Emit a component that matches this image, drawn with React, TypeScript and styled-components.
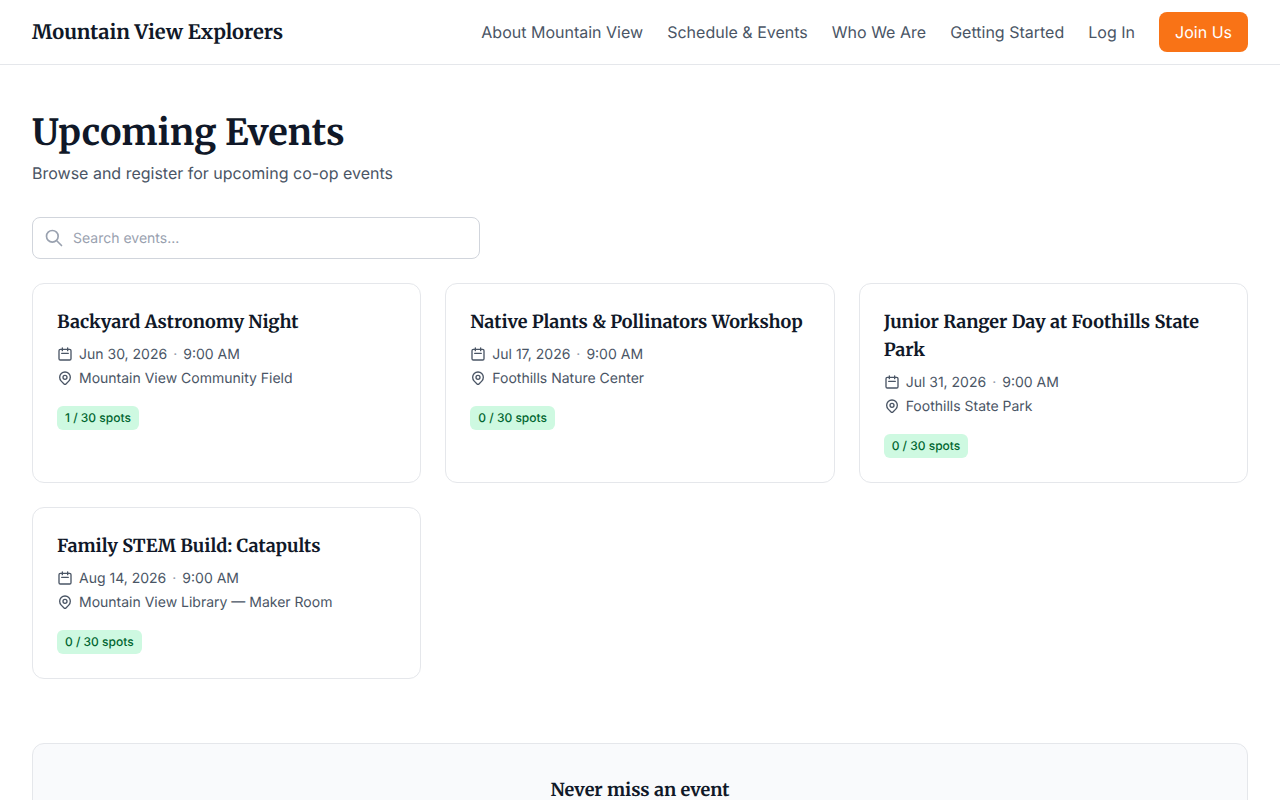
import React from "react";
import styled, { createGlobalStyle } from "styled-components";

const serif = `Merriweather, "Liberation Serif", serif`;
const ink = "#101828";
const muted = "#4a5565";
const line = "#e5e7eb";

const GlobalStyle = createGlobalStyle`
  *, *::before, *::after { box-sizing: border-box; }
  html { height: 100%; }
  body {
    margin: 0;
    height: 100vh;
    overflow: hidden;
    background: #fff;
    color: ${ink};
    font: 16px/24px Inter, "Liberation Sans", sans-serif;
    text-rendering: geometricPrecision;
  }
  h1, h2, h3, p { margin: 0; }
  a { text-decoration: none; }
`;

const Header = styled.header`
  display: flex;
  align-items: center;
  justify-content: space-between;
  height: 65px;
  padding: 0 32px;
  border-bottom: 1px solid ${line};
`;

const Brand = styled.a`
  padding-top: 2px;
  color: ${ink};
  font: 700 20px/28px ${serif};
`;

const Nav = styled.nav`
  display: flex;
  align-items: center;
  gap: 24.1px;
`;

const NavLink = styled.a`
  color: ${muted};
`;

const JoinButton = styled.a`
  padding: 8px 16px;
  border-radius: 8px;
  background: #f97316;
  color: #fff;
`;

const Main = styled.main`
  padding: 48px 32px;
`;

const PageTitle = styled.h1`
  font: 700 36px/40px ${serif};
`;

const Subtitle = styled.p`
  margin-top: 8px;
  color: ${muted};
`;

const SearchField = styled.label`
  display: flex;
  align-items: center;
  gap: 9px;
  width: 448px;
  height: 42px;
  margin: 32px 0 24px;
  padding: 0 16px 0 11px;
  border: 1px solid #d1d5dc;
  border-radius: 8px;
  color: #99a1af;
`;

const SearchInput = styled.input`
  flex: 1;
  min-width: 0;
  padding: 2px 0 0;
  border: 0;
  outline: 0;
  background: transparent;
  color: ${ink};
  font: 14px/20px Inter, "Liberation Sans", sans-serif;
  text-rendering: inherit;

  &::placeholder { color: #99a1af; }
`;

const Icon = styled.svg<{ $size: number }>`
  flex: none;
  width: ${(p) => p.$size}px;
  height: ${(p) => p.$size}px;
  fill: none;
  stroke: currentColor;
  stroke-width: 2;
  stroke-linecap: round;
  stroke-linejoin: round;
`;

const EventGrid = styled.section`
  display: grid;
  grid-template-columns: repeat(3, 1fr);
  gap: 24px;
`;

const EventCard = styled.article`
  padding: 24px;
  border: 1px solid ${line};
  border-radius: 12px;
  background: #fff;
`;

const SectionTitle = styled.h2`
  font: 700 18px/28px ${serif};
`;

const Details = styled.div`
  display: grid;
  gap: 4px;
  margin: 8px 0 18px;
`;

const Detail = styled.div`
  display: flex;
  align-items: center;
  gap: 6px;
  height: 20px;
  color: ${muted};
  font-size: 14px;
  line-height: 20px;
`;

const DetailText = styled.span`
  padding-top: 2px;
`;

const Dot = styled(DetailText)`
  color: #99a1af;
`;

const Spots = styled.span`
  display: block;
  width: fit-content;
  padding: 4px 8px;
  border-radius: 6px;
  background: #cef9e1;
  color: #016630;
  font-size: 12px;
  font-weight: 500;
  line-height: 16px;
`;

const Signup = styled.section`
  margin-top: 64px;
  padding: 32px;
  border: 1px solid ${line};
  border-radius: 12px;
  background: #f9fafc;
  text-align: center;
`;

const links = ["About Mountain View", "Schedule & Events", "Who We Are", "Getting Started", "Log In"];

const events = [
  { title: "Backyard Astronomy Night", date: "Jun 30, 2026", place: "Mountain View Community Field", taken: 1 },
  { title: "Native Plants & Pollinators Workshop", date: "Jul 17, 2026", place: "Foothills Nature Center", taken: 0 },
  { title: "Junior Ranger Day at Foothills State Park", date: "Jul 31, 2026", place: "Foothills State Park", taken: 0 },
  { title: "Family STEM Build: Catapults", date: "Aug 14, 2026", place: "Mountain View Library — Maker Room", taken: 0 },
];

export default function App() {
  return (
    <>
      <GlobalStyle />
      <Header>
        <Brand>Mountain View Explorers</Brand>
        <Nav>
          {links.map((label) => (
            <NavLink key={label}>{label}</NavLink>
          ))}
          <JoinButton>Join Us</JoinButton>
        </Nav>
      </Header>
      <Main>
        <PageTitle>Upcoming Events</PageTitle>
        <Subtitle>Browse and register for upcoming co-op events</Subtitle>
        <SearchField>
          <Icon $size={20} viewBox="0 0 24 24">
            <path d="M21 21l-6-6m2-5a7 7 0 11-14 0 7 7 0 0114 0z" />
          </Icon>
          <SearchInput placeholder="Search events..." />
        </SearchField>
        <EventGrid>
          {events.map((event) => (
            <EventCard key={event.title}>
              <SectionTitle>{event.title}</SectionTitle>
              <Details>
                <Detail>
                  <Icon $size={16} viewBox="0 0 24 24">
                    <path d="M8 7V3m8 4V3m-9 8h10M5 21h14a2 2 0 002-2V7a2 2 0 00-2-2H5a2 2 0 00-2 2v12a2 2 0 002 2z" />
                  </Icon>
                  <DetailText>{event.date}</DetailText>
                  <Dot>·</Dot>
                  <DetailText>9:00 AM</DetailText>
                </Detail>
                <Detail>
                  <Icon $size={16} viewBox="0 0 24 24">
                    <path d="M17.657 16.657L13.414 20.9a1.998 1.998 0 01-2.827 0l-4.244-4.243a8 8 0 1111.314 0z" />
                    <path d="M15 11a3 3 0 11-6 0 3 3 0 016 0z" />
                  </Icon>
                  <DetailText>{event.place}</DetailText>
                </Detail>
              </Details>
              <Spots>{event.taken} / 30 spots</Spots>
            </EventCard>
          ))}
        </EventGrid>
        <Signup>
          <SectionTitle>Never miss an event</SectionTitle>
        </Signup>
      </Main>
    </>
  );
}
